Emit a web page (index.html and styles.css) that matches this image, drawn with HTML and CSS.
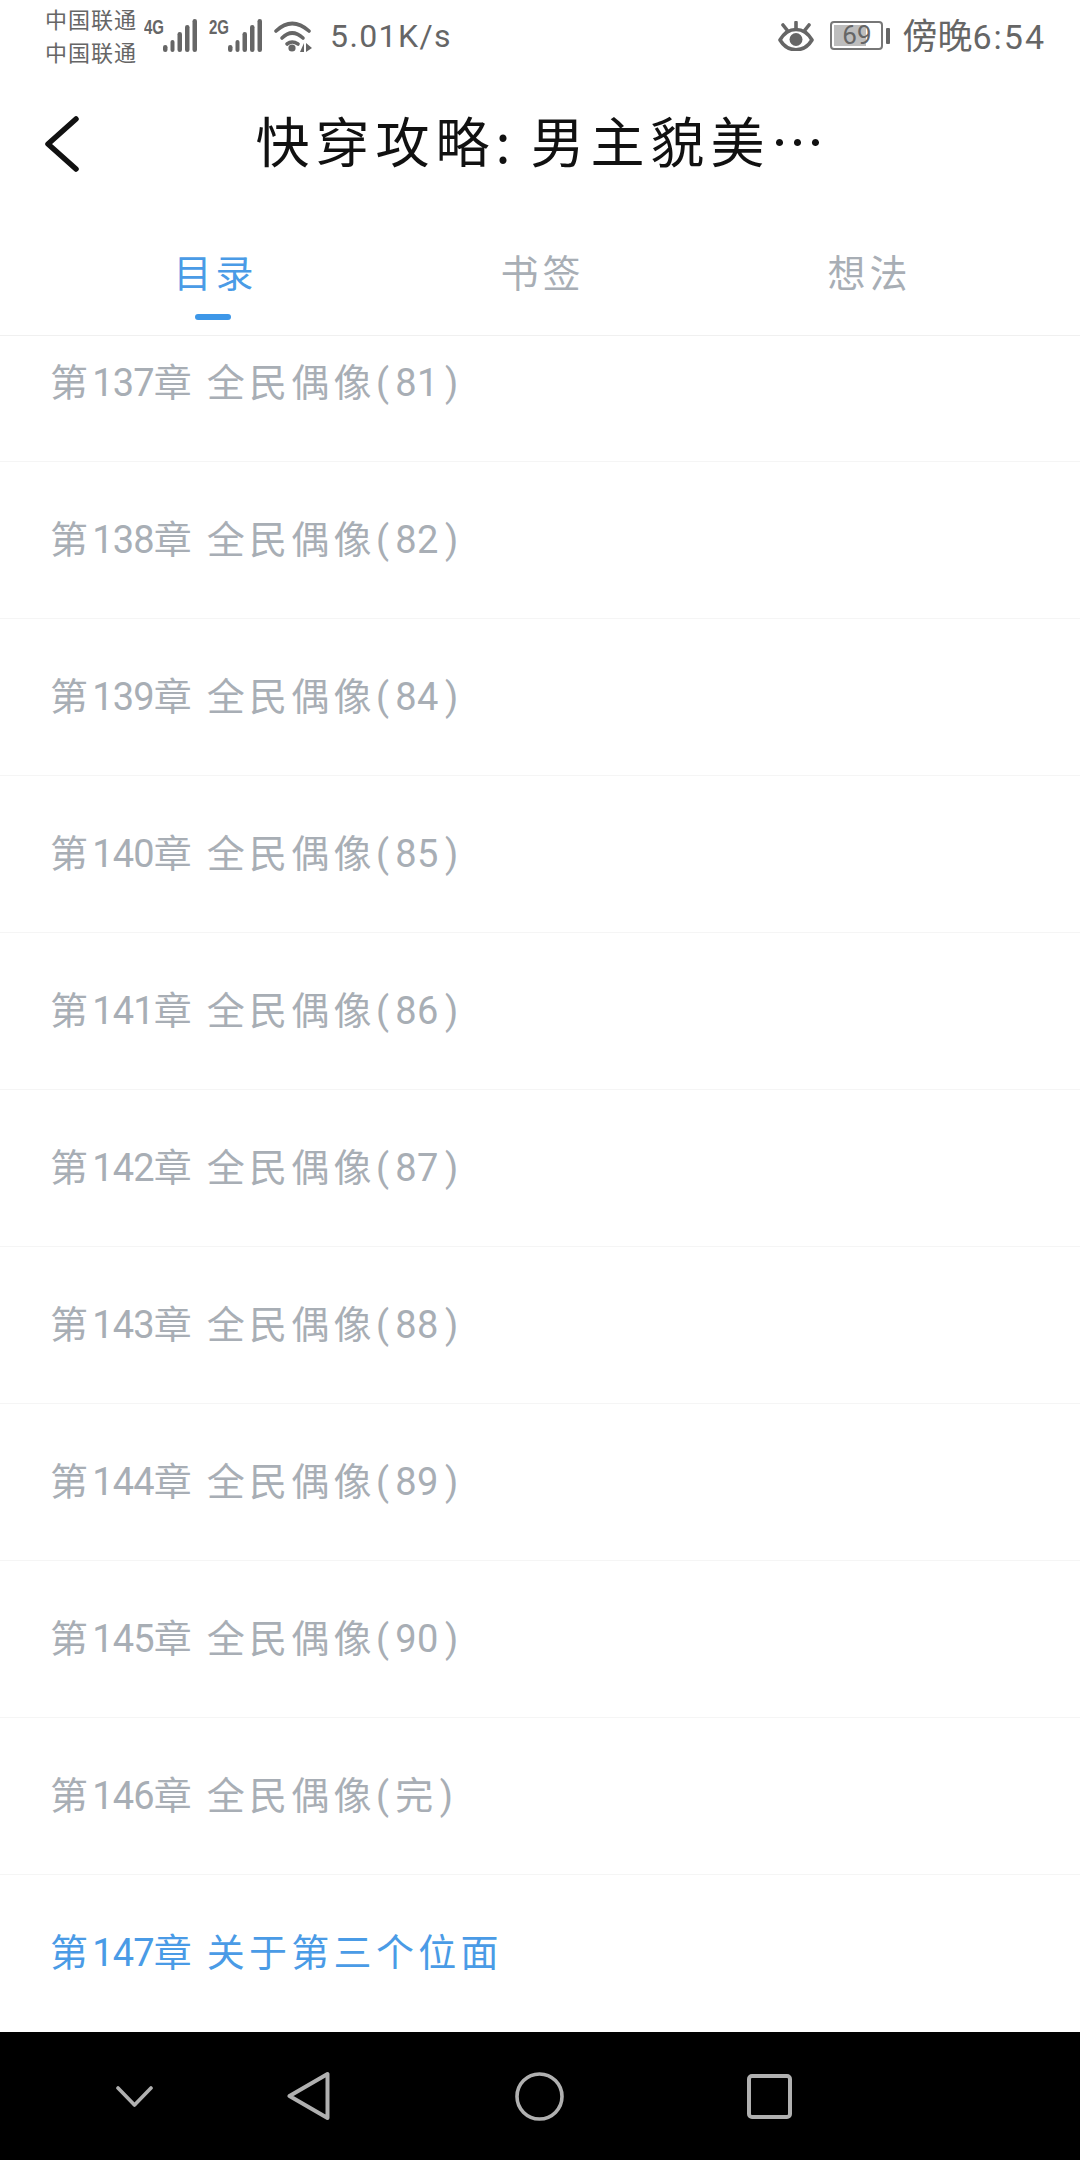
FILE: index.html
```html
<!DOCTYPE html>
<html lang="zh-CN">
<head>
  <meta charset="UTF-8" />
  <title>目录</title>
  <link rel="stylesheet" href="styles.css">
</head>
<body>

  <div class="statusbar">
    <div class="carriers">
      <span>中国联通</span>
      <span>中国联通</span>
    </div>
    <div class="signal">
      <b class="net">4G</b>
      <svg width="34" height="33" viewBox="0 0 34 33"><g fill="#666"><rect x="0" y="26" width="4.5" height="7" rx="2.2"/><rect x="7.5" y="21" width="4" height="12" rx="2"/><rect x="14.5" y="13" width="4.5" height="20" rx="2.2"/><rect x="22" y="6" width="4.5" height="27" rx="2.2"/><rect x="29.5" y="0" width="4.5" height="33" rx="2.2"/></g></svg>
    </div>
    <div class="signal">
      <b class="net">2G</b>
      <svg width="34" height="33" viewBox="0 0 34 33"><g fill="#666"><rect x="0" y="26" width="4.5" height="7" rx="2.2"/><rect x="7.5" y="21" width="4" height="12" rx="2"/><rect x="14.5" y="13" width="4.5" height="20" rx="2.2"/><rect x="22" y="6" width="4.5" height="27" rx="2.2"/><rect x="29.5" y="0" width="4.5" height="33" rx="2.2"/></g></svg>
    </div>
    <svg class="wifi" width="38" height="32" viewBox="0 0 38 32"><g fill="none" stroke="#666" stroke-width="3.6" stroke-linecap="round"><path d="M2 11Q18-4 35 11"/><path d="M8 18Q18 8 29 18"/><path d="M13 24Q18 20 24 24"/></g><circle cx="18" cy="28" r="3.6" fill="#666"/><path d="M26 32l4-9v9zM32 23l6 5-6 4z" fill="#666"/></svg>
    <span class="speed">5.01K/s</span>
    <div class="status-right">
      <svg width="36" height="30" viewBox="0 0 36 30"><g fill="none" stroke="#666" stroke-width="3.6" stroke-linecap="round" stroke-linejoin="round"><path d="M2 19C10 5 26 5 34 19C26 32 10 32 2 19z"/><path d="M18 1.5v6M5 4l4 5M31 4l-4 5"/></g><circle cx="18" cy="18.5" r="6.5" fill="#666"/></svg>
      <div class="battery">
        <div class="battery-box">
          <div class="battery-fill"></div>
          <span class="battery-num">69</span>
        </div>
        <div class="battery-tip"></div>
      </div>
      <span class="clock">傍晚<span class="clock-num">6:54</span></span>
    </div>
  </div>

  <div class="titlebar">
    <svg class="back" width="36" height="56" viewBox="0 0 36 56"><path d="M32 3L4 28l28 25" fill="none" stroke="#111" stroke-width="5.5" stroke-linecap="round" stroke-linejoin="round"/></svg>
    <h1>快穿攻略<span class="colon">:</span>男主貌美…</h1>
  </div>

  <div class="tabs">
    <div class="tab active">目录</div>
    <div class="tab">书签</div>
    <div class="tab">想法</div>
  </div>

  <ul class="chapters">
    <li class="first">第<span class="num">137</span>章 全民偶像(<span class="vol">81</span>)</li>
    <li>第<span class="num">138</span>章 全民偶像(<span class="vol">82</span>)</li>
    <li>第<span class="num">139</span>章 全民偶像(<span class="vol">84</span>)</li>
    <li>第<span class="num">140</span>章 全民偶像(<span class="vol">85</span>)</li>
    <li>第<span class="num">141</span>章 全民偶像(<span class="vol">86</span>)</li>
    <li>第<span class="num">142</span>章 全民偶像(<span class="vol">87</span>)</li>
    <li>第<span class="num">143</span>章 全民偶像(<span class="vol">88</span>)</li>
    <li>第<span class="num">144</span>章 全民偶像(<span class="vol">89</span>)</li>
    <li>第<span class="num">145</span>章 全民偶像(<span class="vol">90</span>)</li>
    <li>第<span class="num">146</span>章 全民偶像(<span class="vol">完</span>)</li>
    <li class="current">第<span class="num">147</span>章 关于第三个位面</li>
  </ul>

  <div class="navbar">
    <svg width="37" height="21" viewBox="0 0 37 21"><path d="M2 2l16.500 17L35 2" fill="none" stroke="#b0b0b0" stroke-width="3.6" stroke-linecap="round" stroke-linejoin="round"/></svg>
    <svg width="43" height="50" viewBox="0 0 43 50"><path d="M40.500 3v44L2.500 25z" fill="none" stroke="#b0b0b0" stroke-width="4" stroke-linejoin="round"/></svg>
    <svg width="49" height="49" viewBox="0 0 49 49"><circle cx="24.500" cy="24.500" r="22.500" fill="none" stroke="#b0b0b0" stroke-width="3.6"/></svg>
    <svg width="45" height="45" viewBox="0 0 45 45"><rect x="2" y="2" width="41" height="41" rx="3" fill="none" stroke="#b0b0b0" stroke-width="4"/></svg>
  </div>

</body>
</html>
```

FILE: styles.css
```css
* {
  box-sizing: border-box;
}

body {
  margin: 0;
  width: 1080px;
  height: 2160px;
  background: #fff;
  font-family: Roboto, "Noto Sans CJK SC", sans-serif;
  color: #333;
  overflow: hidden;
  display: flex;
  flex-direction: column;
}

.statusbar {
  height: 72px;
  padding: 0 34px 0 45px;
  display: flex;
  align-items: center;
  color: #666;
}

.carriers {
  display: flex;
  flex-direction: column;
  width: 99px;
  margin-top: -2px;
  font-family: "Noto Sans CJK SC", sans-serif;
  font-size: 22px;
  line-height: 33px;
  letter-spacing: 1px;
}

.signal {
  display: flex;
  align-items: flex-start;
  margin-right: 12px;
}

.signal svg {
  display: block;
}

.net {
  width: 19px;
  font: bold 20px/16px "Liberation Sans", sans-serif;
  transform: scaleX(0.75);
  transform-origin: left top;
}

.speed {
  margin-left: 18px;
  font-size: 32px;
  letter-spacing: 1.4px;
}

.status-right {
  margin-left: auto;
  display: flex;
  align-items: center;
}

.battery {
  display: flex;
  align-items: center;
  margin-left: 16px;
}

.battery-box {
  position: relative;
  width: 53px;
  height: 29px;
  padding: 2px;
  border: 2px solid #777;
  border-radius: 4px;
}

.battery-fill {
  width: 70%;
  height: 100%;
  background: #bdbdbd;
}

.battery-num {
  position: absolute;
  top: 0;
  left: 0;
  right: 0;
  text-align: center;
  font-size: 26px;
  line-height: 25px;
}

.battery-tip {
  width: 4px;
  height: 16px;
  margin-left: 3px;
  background: #666;
  border-radius: 1px;
}

.clock {
  margin-left: 12px;
  font-family: "Noto Sans CJK SC", sans-serif;
  font-size: 35px;
  line-height: 40px;
}

.clock-num {
  font-family: Roboto, sans-serif;
  font-size: 34px;
  letter-spacing: 2px;
}

.titlebar {
  height: 138px;
  display: flex;
  align-items: center;
  justify-content: center;
  position: relative;
}

.back {
  position: absolute;
  left: 44px;
  top: 44px;
}

.titlebar h1 {
  margin: -2px 0 0 6px;
  font-family: "Noto Sans CJK SC", sans-serif;
  font-size: 54px;
  font-weight: 400;
  color: #111;
  letter-spacing: 6px;
}

.colon {
  margin-right: 14px;
}

.tabs {
  height: 127px;
  display: flex;
  border-bottom: 1px solid #f0f0f0;
}

.tab {
  position: relative;
  width: 327px;
  padding-top: 35px;
  text-align: center;
  font-family: "Noto Sans CJK SC", sans-serif;
  font-size: 38px;
  line-height: 52px;
  letter-spacing: 4px;
  color: #a8aeb5;
}

.tab:first-child {
  margin-left: 52px;
}

.tab.active {
  color: #4a9be6;
}

.tab.active::after {
  content: "";
  position: absolute;
  left: 50%;
  bottom: 15px;
  width: 36px;
  height: 6px;
  margin-left: -21px;
  border-radius: 3px;
  background: #3d97e8;
}

.chapters {
  list-style: none;
  margin: 0;
  padding: 0;
  flex: 1;
}

.chapters li {
  height: 157px;
  padding: 52px 0 0 50px;
  border-bottom: 1px solid #f5f5f5;
  font-size: 38px;
  line-height: 52px;
  letter-spacing: 4.3px;
  word-spacing: -3px;
  color: #a8aeb5;
}

.chapters li.first {
  height: 126px;
  padding-top: 21px;
}

.chapters li.current {
  color: #4a9be6;
  border-bottom: none;
}

.num {
  letter-spacing: -0.9px;
}

.vol {
  margin: 0 6px 0 2px;
  letter-spacing: 0.5px;
}

.navbar {
  height: 128px;
  background: #000;
  display: flex;
  align-items: center;
  padding-left: 116px;
}

.navbar svg:nth-child(2) {
  margin-left: 134px;
}

.navbar svg:nth-child(3) {
  margin-left: 185px;
}

.navbar svg:nth-child(4) {
  margin-left: 183px;
}
```
